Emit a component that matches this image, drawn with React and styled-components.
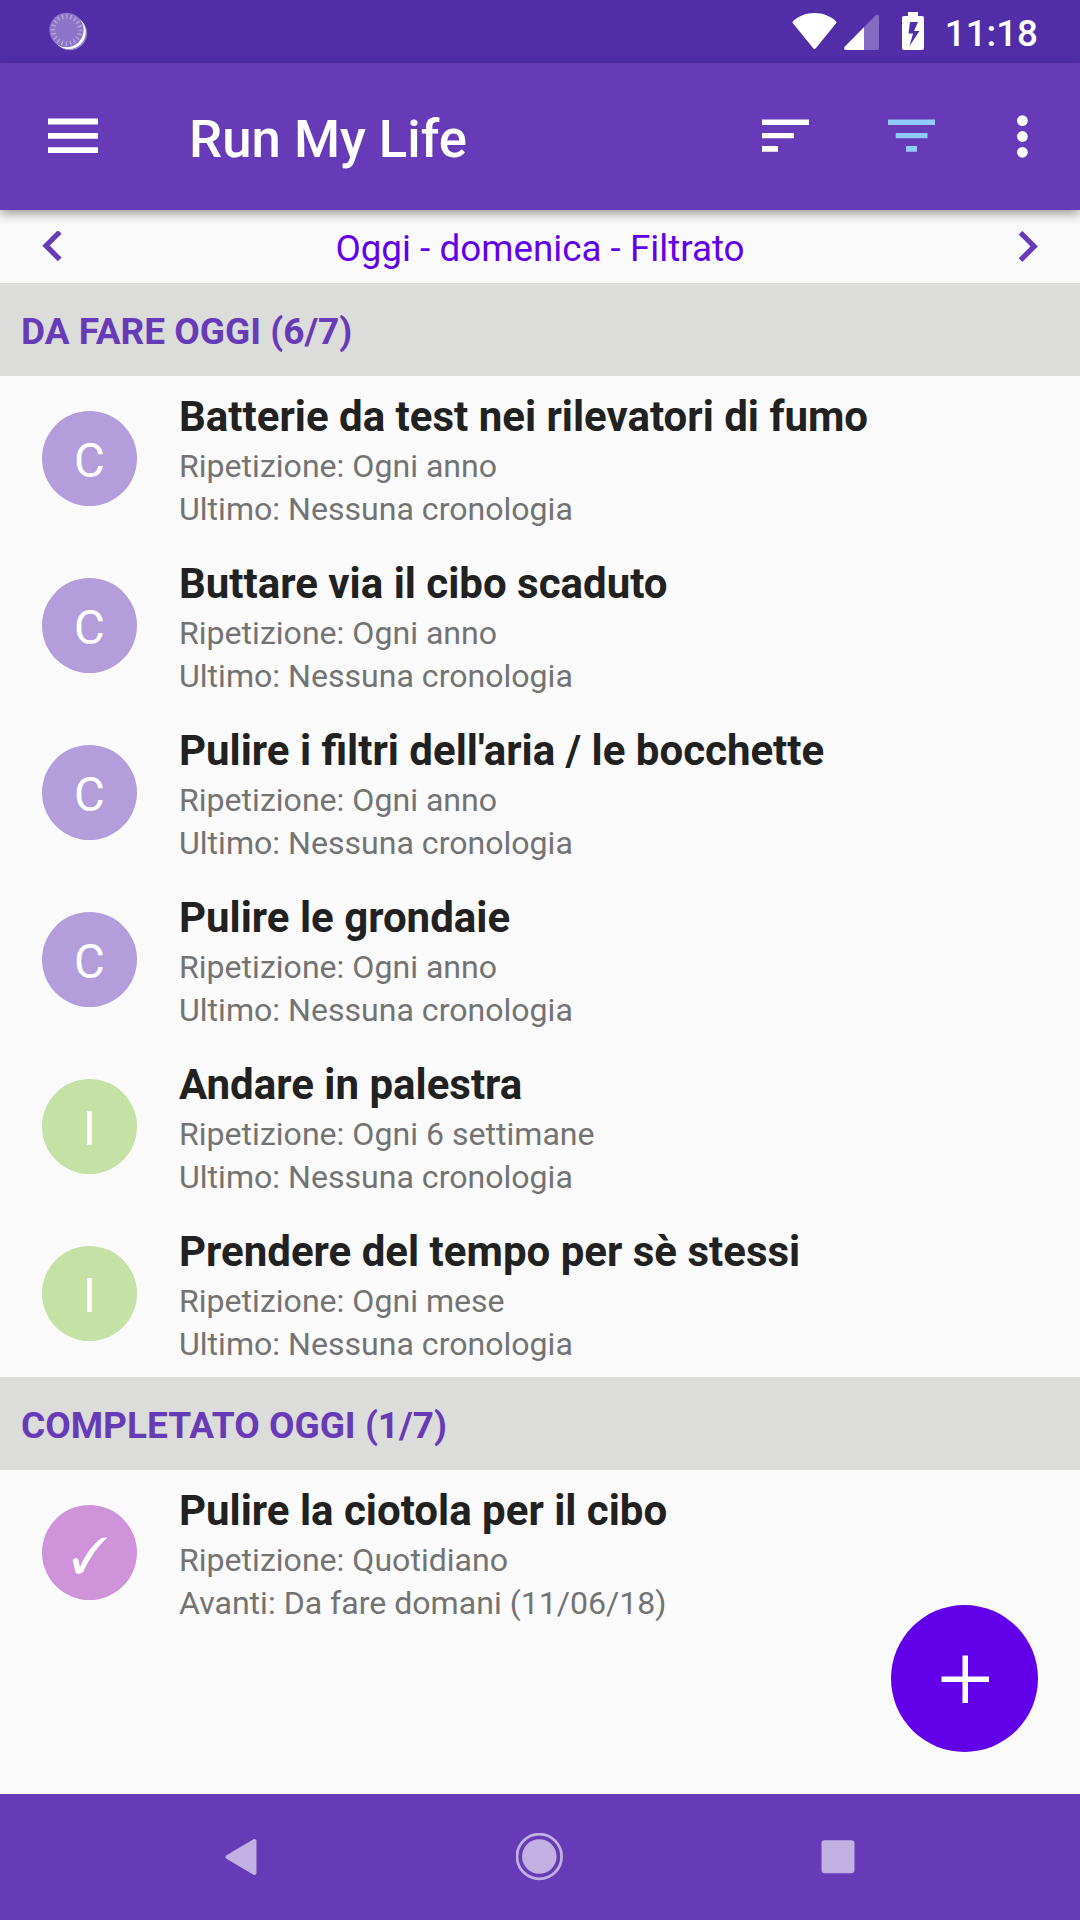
import React from "react";
import styled, { createGlobalStyle } from "styled-components";

const GlobalStyle = createGlobalStyle`
  * {
    box-sizing: border-box;
  }

  body {
    margin: 0;
    background: #fafafa;
    font-family: Roboto, sans-serif;
  }

  svg {
    display: block;
    flex-shrink: 0;
  }
`;

const Screen = styled.div`
  position: relative;
  display: flex;
  flex-direction: column;
  width: 1080px;
  height: 1920px;
  overflow: hidden;
`;

const StatusBar = styled.div`
  display: flex;
  align-items: center;
  justify-content: space-between;
  height: 63px;
  padding: 0 42px 0 44px;
  background: #512da8;
`;

const StatusIcons = styled.div`
  display: flex;
  align-items: center;
`;

const Signals = styled.div`
  display: flex;
  gap: 6px;
  margin-right: 22px;
`;

const Clock = styled.span`
  margin-left: 21px;
  padding-top: 3px;
  color: #fff;
  font-size: 36.75px;
  font-weight: 500;
  line-height: 43px;
`;

const AppBar = styled.header`
  position: relative;
  z-index: 1;
  display: flex;
  align-items: center;
  height: 147px;
  padding: 0 26px 0 42px;
  background: #673ab7;
  box-shadow: 0 4px 10px rgba(0, 0, 0, 0.38);
`;

const AppTitle = styled.h1`
  flex: 1;
  margin: 0 0 0 84px;
  padding-top: 4px;
  color: #fff;
  font-size: 52.7px;
  font-weight: 500;
  line-height: 62px;
`;

const Actions = styled.div`
  display: flex;
  gap: 63px;
  margin-right: 48px;
`;

const DateBar = styled.div`
  display: flex;
  align-items: center;
  justify-content: space-between;
  height: 73px;
  padding: 0 42px;
`;

const DateLabel = styled.span`
  padding-top: 3px;
  color: #6200ea;
  font-size: 36.8px;
  line-height: 43px;
`;

const SectionHeader = styled.h2`
  height: 93px;
  margin: 0;
  padding: 27px 21px 0;
  background: #dcdcda;
  color: #673ab7;
  font-size: 37px;
  font-weight: 700;
  line-height: 43px;
  text-transform: uppercase;
`;

const List = styled.ul`
  display: flex;
  flex-direction: column;
  gap: 1px;
  margin: 0;
  padding: 0;
  list-style: none;
`;

const Item = styled.li`
  display: flex;
  align-items: flex-start;
  height: 166px;
  padding: 0 42px;
`;

const Avatar = styled.div`
  display: flex;
  align-items: center;
  justify-content: center;
  width: 95px;
  height: 95px;
  margin: 35px 42px 0 0;
  padding-top: 4px;
  border-radius: 50%;
  background: ${(props) => props.$color};
  color: #fff;
  font-size: 47.25px;
`;

const ItemText = styled.div`
  padding-top: 16px;
`;

const ItemTitle = styled.div`
  margin-bottom: 4px;
  color: #212121;
  font-size: 42px;
  font-weight: 700;
  line-height: 49px;
`;

const ItemLine = styled.div`
  color: #737373;
  font-size: 32.1px;
  line-height: 43px;
`;

const Fab = styled.button`
  position: absolute;
  right: 42px;
  bottom: 168px;
  display: flex;
  align-items: center;
  justify-content: center;
  width: 147px;
  height: 147px;
  padding: 0;
  border: none;
  border-radius: 50%;
  background: #6200ea;
`;

const NavBar = styled.nav`
  display: flex;
  align-items: center;
  justify-content: space-between;
  height: 126px;
  margin-top: auto;
  padding: 0 218px;
  background: #673ab7;
`;

const todo = [
  { letter: "C", color: "#b39ddb", title: "Batterie da test nei rilevatori di fumo", repeat: "Ogni anno" },
  { letter: "C", color: "#b39ddb", title: "Buttare via il cibo scaduto", repeat: "Ogni anno" },
  { letter: "C", color: "#b39ddb", title: "Pulire i filtri dell'aria / le bocchette", repeat: "Ogni anno" },
  { letter: "C", color: "#b39ddb", title: "Pulire le grondaie", repeat: "Ogni anno" },
  { letter: "I", color: "#c5e1a5", title: "Andare in palestra", repeat: "Ogni 6 settimane" },
  { letter: "I", color: "#c5e1a5", title: "Prendere del tempo per sè stessi", repeat: "Ogni mese" },
];

const SyncIcon = () => (
  <svg width="48" height="48" viewBox="0 0 48 48">
    <circle cx="26" cy="25.3" r="17" fill="#9b85cf" />
    <circle cx="24.7" cy="24" r="17" fill="#fff" />
    <circle cx="22.5" cy="22" r="17.2" fill="#8c75c8" />
    <circle
      cx="22.5"
      cy="22"
      r="13.5"
      fill="none"
      stroke="#b9a9de"
      strokeWidth="4.6"
      strokeDasharray="1.3 2.94"
      strokeDashoffset="0.65"
    />
  </svg>
);

const WifiIcon = () => (
  <svg width="46" height="63" viewBox="0 0 46 63">
    <path d="M.7 21.5C6.7 16 13.7 13 22.5 13s15.8 3 21.8 8.5q.4.9-.2 1.8L24 48q-1.5 1.8-3 0L.9 23.3Q.2 22.4.7 21.5z" fill="#fff" />
  </svg>
);

const SignalIcon = () => (
  <svg width="36" height="63" viewBox="0 0 36 63">
    <path d="M31.5 15.6Q35 13.5 35 17v31q0 2-2 2H2Q-1 49.5 1 46.5z" fill="#fff" fillOpacity=".3" />
    <path d="M20 27.2V50H2Q-1 49.5 1 46.5z" fill="#fff" />
  </svg>
);

const BatteryIcon = () => (
  <svg width="22" height="63" viewBox="0 0 22 63">
    <path
      fillRule="evenodd"
      fill="#fff"
      d="M6 12h10v4h4q2 0 2 2v30q0 2-2 2H2q-2 0-2-2V18q0-2 2-2h4zM8 22L6.5 33.5H11L7.5 46l10-15H12l4-9z"
    />
  </svg>
);

const MenuIcon = () => (
  <svg width="63" height="63" viewBox="0 0 63 63" fill="#fff">
    <path d="M6 13.5h50v6H6zM6 28h50v5.7H6zM6 42.2h50V48H6z" />
  </svg>
);

const SortIcon = () => (
  <svg width="63" height="63" viewBox="0 0 63 63" fill="#fff">
    <path d="M8 14.6h47V20H8zM8 28h31.8v5.2H8zM8 41h16v5.7H8z" />
  </svg>
);

const FilterIcon = () => (
  <svg width="63" height="63" viewBox="0 0 63 63" fill="#90caf9">
    <path d="M8 14.6h47V20H8zM15.7 28h31.8v5.2H15.7zM26 41h11v5.7H26z" />
  </svg>
);

const MoreIcon = () => (
  <svg width="63" height="63" viewBox="0 0 63 63" fill="#fff">
    <circle cx="31.4" cy="15.6" r="5.4" />
    <circle cx="31.4" cy="31.5" r="5.4" />
    <circle cx="31.4" cy="47.3" r="5.4" />
  </svg>
);

const Chevron = ({ right }) => (
  <svg width="20" height="32" viewBox="0 0 20 32" fill="none" stroke="#673ab7" strokeWidth="5.2">
    <path d={right ? "M2.5 1.7l13.7 13.7L2.5 29.1" : "M17.7 1L4 14.7l13.7 13.7"} />
  </svg>
);

const CheckIcon = () => (
  <svg width="36" height="38" viewBox="0 0 36 38">
    <path
      d="M.6 24Q2 22.3 4 22q2 .2 2.500 2.500L8 31Q17 10.500 29 2.500q3-1.200 6.500-1Q27 9 20 20T11.500 35.500Q10.500 37.500 7 37.700T3.500 36z"
      fill="#fff"
    />
  </svg>
);

const TaskItem = ({ color, icon, title, repeat, last }) => (
  <Item>
    <Avatar $color={color}>{icon}</Avatar>
    <ItemText>
      <ItemTitle>{title}</ItemTitle>
      <ItemLine>Ripetizione: {repeat}</ItemLine>
      <ItemLine>{last}</ItemLine>
    </ItemText>
  </Item>
);

const App = () => {
  return (
    <Screen>
      <GlobalStyle />
      <StatusBar>
        <SyncIcon />
        <StatusIcons>
          <Signals>
            <WifiIcon />
            <SignalIcon />
          </Signals>
          <BatteryIcon />
          <Clock>11:18</Clock>
        </StatusIcons>
      </StatusBar>
      <AppBar>
        <MenuIcon />
        <AppTitle>Run My Life</AppTitle>
        <Actions>
          <SortIcon />
          <FilterIcon />
        </Actions>
        <MoreIcon />
      </AppBar>
      <DateBar>
        <Chevron />
        <DateLabel>Oggi - domenica - Filtrato</DateLabel>
        <Chevron right />
      </DateBar>
      <SectionHeader>Da fare oggi (6/7)</SectionHeader>
      <List>
        {todo.map((task) => (
          <TaskItem
            key={task.title}
            color={task.color}
            icon={task.letter}
            title={task.title}
            repeat={task.repeat}
            last="Ultimo: Nessuna cronologia"
          />
        ))}
      </List>
      <SectionHeader>Completato oggi (1/7)</SectionHeader>
      <List>
        <TaskItem
          color="#ce93d8"
          icon={<CheckIcon />}
          title="Pulire la ciotola per il cibo"
          repeat="Quotidiano"
          last="Avanti: Da fare domani (11/06/18)"
        />
      </List>
      <Fab>
        <svg width="48" height="48" viewBox="0 0 48 48" fill="#fff">
          <path d="M21.5.5H27v21h21V27H27v21h-5.5V27h-21v-5.5h21z" />
        </svg>
      </Fab>
      <NavBar>
        <svg width="48" height="48" viewBox="0 0 48 48">
          <path d="M9.5 24l27-16v32z" fill="#c3b0e2" stroke="#c3b0e2" strokeWidth="4" strokeLinejoin="round" />
        </svg>
        <svg width="48" height="48" viewBox="0 0 48 48">
          <circle cx="23.3" cy="23.5" r="22.3" fill="none" stroke="#c3b0e2" strokeWidth="2.8" />
          <circle cx="23.3" cy="23.5" r="17.3" fill="#c3b0e2" />
        </svg>
        <svg width="48" height="48" viewBox="0 0 48 48">
          <rect x="7.5" y="7.3" width="33" height="33" rx="3" fill="#c3b0e2" />
        </svg>
      </NavBar>
    </Screen>
  );
};

export default App;
